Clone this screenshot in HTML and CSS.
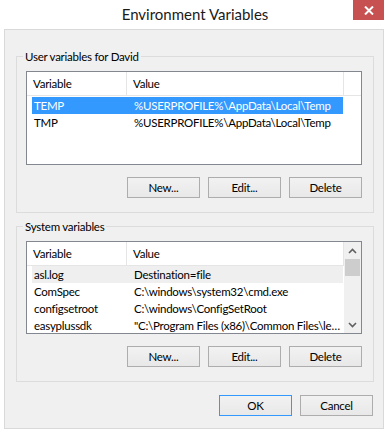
FILE: index.html
```
<!DOCTYPE html>
<html lang="en">
<head>
    <meta charset="UTF-8">
    <meta name="viewport" content="width=device-width, initial-scale=1.0">
    <title>Environment Variables</title>
    <link rel="stylesheet" href="styles.css">
</head>
<body>
    <div class="window">
        <div class="titlebar">
            <span></span>
            <h1 class="title">Environment Variables</h1>
            <button class="close" aria-label="Close">
                <svg width="10" height="9" viewBox="0 0 10 9"><path d="M1 0.5 L9 8.5 M9 0.5 L1 8.5" stroke="#fff" stroke-width="2"/></svg>
            </button>
        </div>

        <div class="client">
            <fieldset class="group">
                <legend>User variables for David</legend>
                <div class="listview user-list">
                    <div class="lv-main">
                        <div class="lv-header">
                            <div class="hcell col-var">Variable</div>
                            <div class="hcell col-val">Value</div>
                        </div>
                        <div class="lv-body">
                            <div class="row selected"><span class="cell cell-var">TEMP</span><span class="cell cell-val">%USERPROFILE%\AppData\Local\Temp</span></div>
                            <div class="row"><span class="cell cell-var">TMP</span><span class="cell cell-val">%USERPROFILE%\AppData\Local\Temp</span></div>
                        </div>
                    </div>
                </div>
                <div class="btn-row">
                    <button class="btn">New...</button>
                    <button class="btn">Edit...</button>
                    <button class="btn">Delete</button>
                </div>
            </fieldset>

            <fieldset class="group system">
                <legend>System variables</legend>
                <div class="listview system-list">
                    <div class="lv-main">
                        <div class="lv-header">
                            <div class="hcell col-var">Variable</div>
                            <div class="hcell col-val">Value</div>
                        </div>
                        <div class="lv-body">
                            <div class="row inactive"><span class="cell cell-var">asl.log</span><span class="cell cell-val">Destination=file</span></div>
                            <div class="row"><span class="cell cell-var">ComSpec</span><span class="cell cell-val">C:\windows\system32\cmd.exe</span></div>
                            <div class="row"><span class="cell cell-var">configsetroot</span><span class="cell cell-val">C:\windows\ConfigSetRoot</span></div>
                            <div class="row"><span class="cell cell-var">easyplussdk</span><span class="cell cell-val">"C:\Program Files (x86)\Common Files\lenovo\easyplussdk\bin"</span></div>
                        </div>
                    </div>
                    <div class="scrollbar">
                        <div class="sb-arrow">
                            <svg width="9" height="6" viewBox="0 0 9 6"><polyline points="1,5 4.5,1.5 8,5" fill="none" stroke="#606060" stroke-width="1.6"/></svg>
                        </div>
                        <div class="sb-track"><div class="sb-thumb"></div></div>
                        <div class="sb-arrow">
                            <svg width="9" height="6" viewBox="0 0 9 6"><polyline points="1,1 4.5,4.5 8,1" fill="none" stroke="#606060" stroke-width="1.6"/></svg>
                        </div>
                    </div>
                </div>
                <div class="btn-row">
                    <button class="btn">New...</button>
                    <button class="btn">Edit...</button>
                    <button class="btn">Delete</button>
                </div>
            </fieldset>

            <div class="dialog-buttons">
                <button class="btn default">OK</button>
                <button class="btn">Cancel</button>
            </div>
        </div>
    </div>
</body>
</html>
```

FILE: styles.css
```
body { margin: 0; background: #fff; font-family: Lato, "Noto Sans", sans-serif; font-size: 11.5px; letter-spacing: -0.25px; color: #000; }
.window { width: 390px; height: 435px; background: #fff; }

.titlebar { height: 29px; display: grid; grid-template-columns: 1fr auto 1fr; align-items: start; }
.title { margin: 0; padding-top: 4px; font-size: 15px; font-weight: normal; line-height: 20px; letter-spacing: 0; color: #1a1a1a; }
.close { justify-self: end; margin-right: 6px; width: 31px; height: 20px; border: none; padding: 0; background: #c75050; display: flex; align-items: center; justify-content: center; }

.client { box-sizing: border-box; height: 400px; margin: 0 6px 0 4px; border: 1px solid #d9d9d9; background: #f0f0f0; padding-top: 19px; }

.group { margin: 0 9px 0 11px; padding: 7px 11px 14px 9px; border: 1px solid #dcdcdc; }
.group legend { margin-left: -3px; padding: 0 2px; line-height: 15px; }
.group.system { margin-top: 6px; }

.listview { box-sizing: border-box; display: flex; border: 1px solid #828790; background: #fff; overflow: hidden; }
.user-list { height: 94px; }
.system-list { height: 93px; }
.lv-main { flex: 1; overflow: hidden; }

.lv-header { display: flex; height: 24px; border-bottom: 1px solid #e5e5e5; box-sizing: border-box; }
.hcell { box-sizing: border-box; padding-left: 6px; line-height: 23px; border-right: 1px solid #e5e5e5; }
.col-var { width: 100px; }
.col-val { width: 217px; }

.lv-body { padding-top: 1px; }
.system-list .lv-body { padding-top: 0; }
.row { display: flex; margin-left: 5px; width: 311px; height: 17px; line-height: 17px; }
.row.selected { background: #3399ff; color: #fff; }
.row.inactive { background: #efefef; }
.cell { white-space: nowrap; overflow: hidden; }
.cell-var { box-sizing: border-box; width: 95px; padding-left: 2px; }
.cell-val { flex: 1; padding-left: 7px; padding-right: 2px; text-overflow: ellipsis; }

.scrollbar { width: 17px; background: #f0f0f0; display: flex; flex-direction: column; }
.sb-arrow { height: 17px; display: flex; align-items: center; justify-content: center; }
.sb-track { flex: 1; }
.sb-thumb { height: 17px; margin: 0 1px; background: #cdcdcd; }

.btn-row { display: flex; justify-content: flex-end; gap: 8px; margin-top: 12px; }
.btn { width: 73px; height: 21px; padding: 0; border: 1px solid #adadad; background: linear-gradient(#f2f2f2, #e8e8e8); font-family: inherit; font-size: 11.5px; letter-spacing: -0.25px; color: #000; }
.btn.default { border-color: #3399ff; }

.dialog-buttons { display: flex; justify-content: flex-end; gap: 8px; margin: 13px 10px 0 0; }
```
